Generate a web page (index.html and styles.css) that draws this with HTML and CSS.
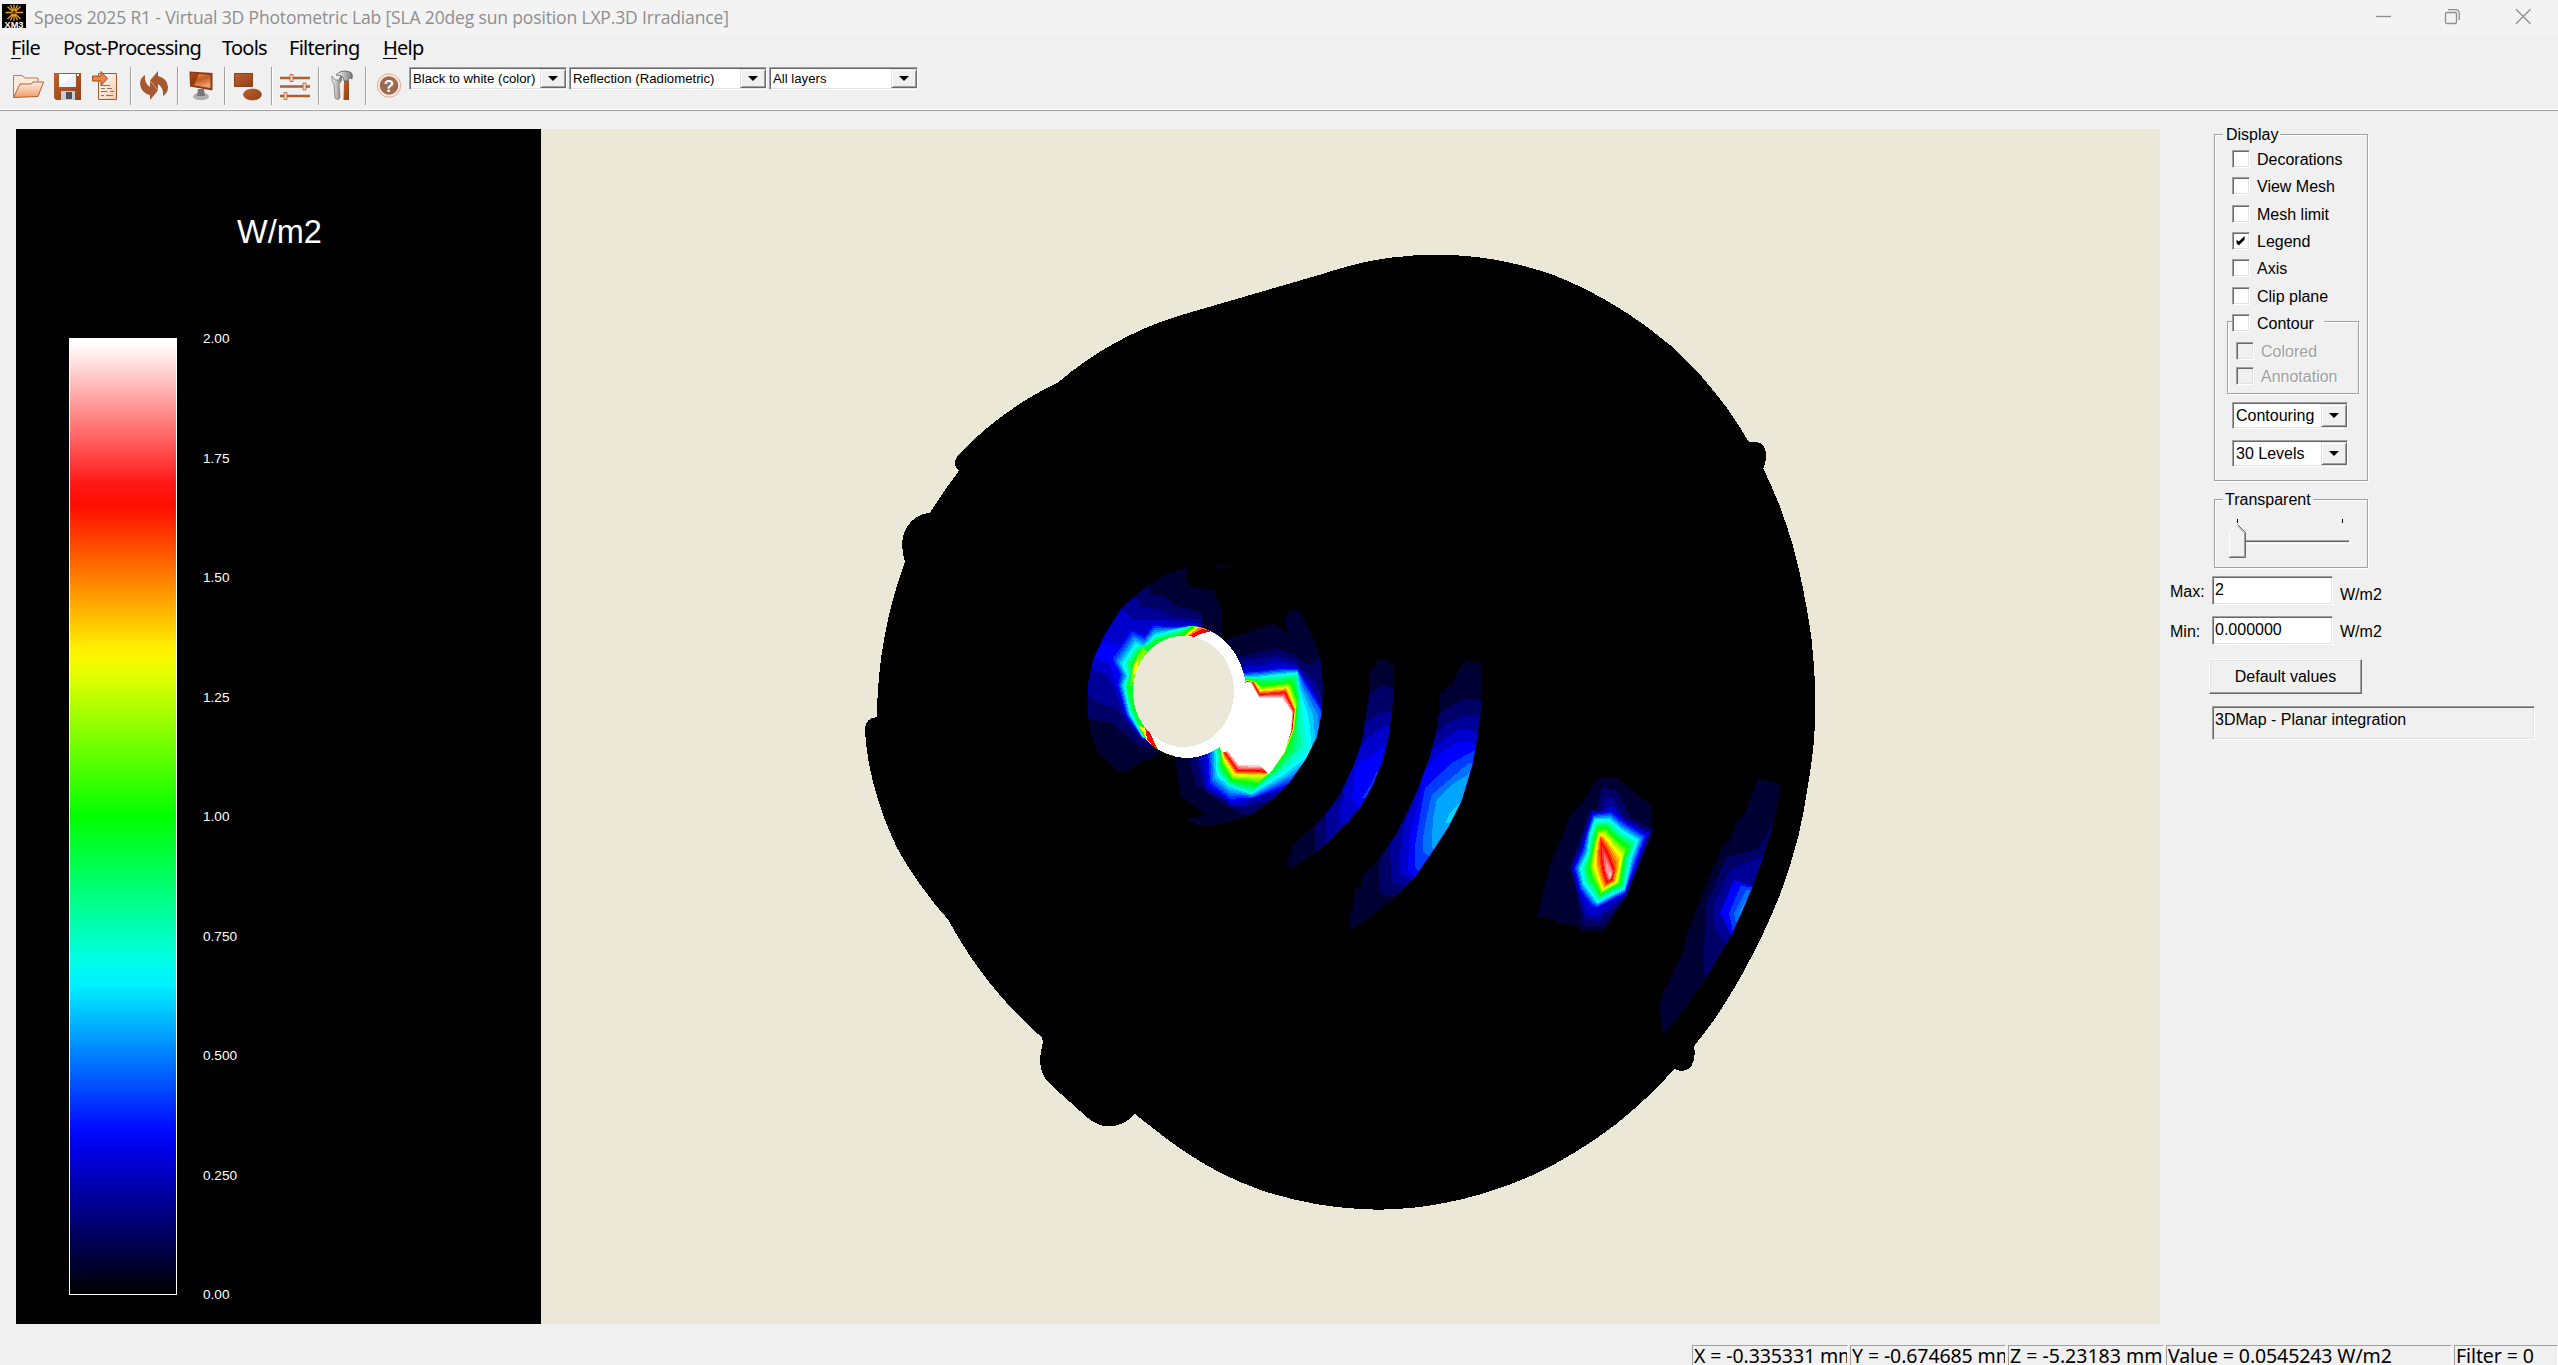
FILE: index.html
```html
<!DOCTYPE html>
<html lang="en">
<head>
<meta charset="utf-8">
<title>Speos 2025 R1 - Virtual 3D Photometric Lab</title>
<link rel="stylesheet" href="styles.css">
</head>
<body>
<header class="titlebar">
  <svg class="app-icon" viewBox="0 0 24 24"><rect width="24" height="24"/><g stroke="#e9a01c" stroke-width="1.3"><path d="M12 0.5V17M3.5 8.5H21M5.5 2.5L18.500 15M18.500 2.500L5.500 15M8.500 1L15.500 16.500M15.500 1L8.500 16.500"/></g><circle cx="12" cy="8.500" r="2" fill="#5a3a08"/><path d="M1 17H23V24H1Z"/><text x="12" y="24" text-anchor="middle" textLength="19" lengthAdjust="spacingAndGlyphs">XM3</text></svg>
  <span class="title-text">Speos 2025 R1 - Virtual 3D Photometric Lab [SLA 20deg sun position LXP.3D Irradiance]</span>
  <svg class="win-buttons" viewBox="0 0 160 34" fill="none" stroke="#8e8e8e" stroke-width="1.300"><path d="M1 16.500H16"/><rect x="70.500" y="12.500" width="11" height="11" rx="1.500"/><path d="M73 9.700H80Q84.300 9.700 84.300 14V20"/><path d="M141 9.300L155.500 23.800M155.500 9.300L141 23.800"/></svg>
</header>

<nav class="menubar">
  <span class="m-file"><u>F</u>ile</span><span class="m-post">Post-Processing</span><span class="m-tools">Tools</span><span class="m-filter">Filtering</span><span class="m-help"><u>H</u>elp</span>
</nav>

<div class="toolbar">
  <svg class="tools" viewBox="0 0 409 44">
    <defs>
      <linearGradient id="peach" x2="0" y2="1"><stop offset="0" stop-color="#fff0e4"/><stop offset="1" stop-color="#f09a68"/></linearGradient>
      <linearGradient id="rust" x2="1" y2="1"><stop offset="0" stop-color="#c0602c"/><stop offset="1" stop-color="#8e4218"/></linearGradient>
      <linearGradient id="paper" x2="1" y2="1"><stop offset="0" stop-color="#fff"/><stop offset="1" stop-color="#f6c9ac"/></linearGradient>
      <linearGradient id="screen" x2=".4" y2="1"><stop offset="0" stop-color="#ff9a58"/><stop offset=".5" stop-color="#c05a24"/><stop offset="1" stop-color="#f0a070"/></linearGradient>
      <linearGradient id="steel" x2="1"><stop offset="0" stop-color="#fff"/><stop offset="1" stop-color="#777"/></linearGradient>
    </defs>
    <g stroke="#a0a0a0"><path d="M130.500 2V40M177.500 2V40M224.500 2V40M271.500 2V40M318.500 2V40M365.500 2V40"/></g>
    <g stroke="#fff"><path d="M131.500 2V40M178.500 2V40M225.500 2V40M272.500 2V40M319.500 2V40M366.500 2V40"/></g>
    <!-- open -->
    <path d="M13.500 33V10.500H22L25 13H38V18" fill="#ffe9da" stroke="#b87a58"/><path d="M13.500 32.500L20 19H31L33 17H43.500L38 31.500Z" fill="url(#peach)" stroke="#a8643e"/>
    <!-- save -->
    <path d="M54 8H81V35H56L54 33Z" fill="url(#rust)"/><path d="M59 9H76V22H59Z" fill="#e8efff"/><path d="M59 9H76L59 21Z" fill="#fff"/><path d="M61 26H75V35H61Z" fill="#c8ccd6"/><path d="M66 27H72V34H66Z" fill="#50505c"/><path d="M77 9h2v2h-2z" fill="#fff"/>
    <!-- import -->
    <path d="M98.500 8.500H116.500V34.500H98.500Z" fill="url(#paper)" stroke="#a55a30"/><path d="M101 20.500h9M101 23.500h4m2 0h5M101 26.500h6m3 0h4M101 30.500h3m2 0h7" stroke="#8c7264"/><path d="M92.500 11H101V6.500L107.500 13.500L101 20.500V16H92.500Z" fill="#ef8448" stroke="#a04a1c"/>
    <!-- refresh -->
    <g fill="#a6582e"><path d="M158 6V11Q167 13 168 22Q168 28 163 31Q164 23 158 19V25L150 15.500Z"/><path d="M158 6V11Q167 13 168 22Q168 28 163 31Q164 23 158 19V25L150 15.500Z" transform="rotate(180 154 20.500)"/></g>
    <!-- monitor -->
    <ellipse cx="201" cy="31.500" rx="8" ry="3.800" fill="#b0b0b0"/><path d="M198 24h6l1 7h-8z" fill="#777"/><path d="M189.500 6.500L212.500 8V25.500L190 21.500Z" fill="#8a3a12"/><path d="M191.500 8.500L210.500 10V23L192 20Z" fill="url(#screen)"/><path d="M191.500 8.500L199 9L194 20.300L192 20Z" fill="#8c3208" opacity=".8"/>
    <!-- shapes -->
    <path d="M234.500 8.500h18v13h-18z" fill="url(#rust)" stroke="#8a4018"/><ellipse cx="252.500" cy="29.500" rx="9" ry="5.500" fill="url(#rust)" stroke="#8a4018" stroke-width=".6"/>
    <!-- sliders -->
    <g stroke="#ad602f" stroke-width="2.600"><path d="M280 13H310M280 21.500H310M280 31H310"/></g><g fill="#f6d6c2" stroke="#ad602f" stroke-width=".8"><path d="M290 9.500h3v7h-3zM303 18h3v7h-3zM284 27.500h3v7h-3z"/></g>
    <!-- wrench and hammer -->
    <path d="M332 11Q331 17 334 19L335 33Q337 36 340 33L339 19Q343 16 341 10L339 15H335Z" fill="url(#steel)" stroke="#777" stroke-width=".8"/><path d="M344 16H349V35H343.500Z" fill="url(#rust)"/><path d="M336 10Q341 4 350 7Q353 8 352 14Q349 11 348 16H344Q344 10 336 10Z" fill="url(#steel)" stroke="#555" stroke-width=".8"/>
    <!-- help -->
    <circle cx="389" cy="20.500" r="11.700" fill="#fbe9df" stroke="#ddae94"/><circle cx="389" cy="20.500" r="9.300" fill="#9b6a50"/><text class="q" x="389" y="27" text-anchor="middle">?</text>
  </svg>
  <div class="combo c1"><span>Black to white (color)</span><i></i></div>
  <div class="combo c2"><span>Reflection (Radiometric)</span><i></i></div>
  <div class="combo c3"><span>All layers</span><i></i></div>
</div>

<main class="work">
  <section class="legend">
    <h1>W/m2</h1>
    <div class="scale">
      <div class="ramp"></div>
      <div class="ticks"><span>2.00</span><span>1.75</span><span>1.50</span><span>1.25</span><span>1.00</span><span>0.750</span><span>0.500</span><span>0.250</span><span>0.00</span></div>
    </div>
  </section>

  <svg class="view" viewBox="541 129 1619 1195" shape-rendering="crispEdges">
    <defs>
      <clipPath id="ringClip"><path d="M383 82L320 102 262 137 225 168 185 205 130 290 100 360 84 430 82 510 92 580 115 642 250 760 375 838 403 847 405 856 440 857 500 850 570 825 640 778 690 725 735 660 770 590 785 515 789 440 780 350 765 310 745 262 713 207 600 60 430 60Z"/></clipPath>
      <clipPath id="beamClip"><ellipse cx="381" cy="455.500" rx="177" ry="198"/></clipPath>
      <clipPath id="arcA"><path d="M960 355L1000 375 1002 450 995 520 985 590 965 670 935 740 905 795 860 850 800 912 765 938 700 983 685 983 681 960 695 945 697 915 760 860 790 830 840 765 880 680 905 610 915 545 927 470 927 400Z"/></clipPath>
      <clipPath id="arcB"><path d="M1215 358L1242 372 1250 366 1263 370 1265 440 1262 520 1250 600 1238 670 1205 780 1165 860 1110 945 1065 1010 1008 1070 940 1125 873 1170 865 1138 880 1100 887 1045 903 1040 905 1010 970 940 1010 880 1050 800 1075 745 1110 650 1130 570 1138 510 1138 465 1175 430Z"/></clipPath>
      <clipPath id="streak"><path d="M775 113L800 124 843 130 830 210 820 250 790 350 757 440 697 580 620 712 560 800 495 880 488 870 477 805 485 768 550 632 558 590 615 440 670 315 685 310 710 245 735 215Z"/></clipPath>
    </defs>
    <!-- lens outline -->
    <path d="M1178 316L1324 273.500Q1340 268 1361 263A380 380 0 0 1 1390 257.700A380 380 0 0 1 1440 254.700A380 380 0 0 1 1493 259.300A380 380 0 0 1 1553.300 275A400 400 0 0 1 1606.700 300.700A400 400 0 0 1 1646.700 326.700L1673.300 347.700A500 500 0 0 1 1700 374.700A500 500 0 0 1 1726.700 407.700A500 500 0 0 1 1749 442.300C1762 440 1766 446 1766 455Q1766 463 1763.300 468.300A700 700 0 0 1 1780 506.700A700 700 0 0 1 1793.300 546.700A700 700 0 0 1 1803.300 590A700 700 0 0 1 1811.700 640A700 700 0 0 1 1815.500 700A600 600 0 0 1 1814 740A600 600 0 0 1 1808.300 783.300A600 600 0 0 1 1798.300 836.700A600 600 0 0 1 1781.700 890A600 600 0 0 1 1753.300 953.300A600 600 0 0 1 1713.300 1021L1693.800 1046.700C1697 1058 1692 1077 1674.400 1069A480 480 0 0 1 1616.200 1124A460 460 0 0 1 1536.200 1173.500A420 420 0 0 1 1475.600 1195.700A420 420 0 0 1 1417.500 1207.300A420 420 0 0 1 1378.700 1209.700A420 420 0 0 1 1315.700 1204A420 420 0 0 1 1262.400 1190.700A420 420 0 0 1 1221.200 1173.300A400 400 0 0 1 1163 1136L1134.900 1114Q1124 1126.300 1108.700 1126.300Q1097 1126 1087.900 1118L1051 1085Q1037 1073 1041 1052L1042.800 1042Q1042.500 1036 1038 1034A420 420 0 0 1 948.400 920A400 400 0 0 1 897.400 848.600A350 350 0 0 1 878.300 800.800A350 350 0 0 1 868.700 762.500A350 350 0 0 1 864.900 730.600Q865 718 877 717.200A460 460 0 0 1 905 561.600C898 542 903 517 930 512.500A500 500 0 0 1 959.300 470.400C953 467 953 460 960 453.200A340 340 0 0 1 1058.100 382.400A344 344 0 0 1 1178 316Z"/>

    <g transform="translate(1060 540) scale(.33333)">
      <g clip-path="url(#ringClip)">
        <path class="l1" d="M383 82L200 50 40 300 40 600 115 642 140 658 165 697 205 692 245 665 290 650 381 455 490 290 484 275 483 205 460 150 388 138 378 112Z"/>
        <path class="l1" d="M500 298L570 275 635 250 690 282 672 245 687 213 713 207 900 250 900 800 500 900 405 870 403 847 375 838 438 825 362 770 345 660 381 455Z"/>
        <path class="l1" d="M435 75L480 75 520 82 470 80Z"/>
        <path class="l2" d="M262 137L272 162 315 170 348 198 420 215 430 265 381 455 270 630 215 605 185 575 150 545 60 535 60 150Z"/>
        <path class="l3" d="M228 172L243 200 300 210 345 230 425 238 381 455 250 600 200 550 170 505 120 490 60 450 60 180Z"/>
        <path class="l4" d="M183 205L220 240 310 240 420 250 381 455 240 590 190 520 160 440 135 400 60 375 60 210Z"/>
        <path class="l2" d="M520 352L585 340 648 325 710 345 718 362 755 375 778 350 900 400 900 700 640 850 570 825 545 822 510 800 480 790 455 765 430 745 410 740 385 650 450 500Z"/>
        <path class="l3" d="M535 364L580 358 650 348 712 365 720 385 765 420 787 480 900 500 800 700 640 778 600 790 555 800 508 798 495 780 435 755 408 650 450 500Z"/>
        <path class="l4" d="M545 380L600 378 650 362 714 378 725 400 755 440 785 505 900 550 735 660 665 752 585 770 555 795 510 795 497 775 440 745 424 650 450 500Z"/>
        <g id="lobe"></g>
      </g>
      <ellipse cx="381" cy="455.500" rx="177" ry="198" fill="#fff"/>
      <g clip-path="url(#ringClip)"><g id="crescent"></g></g>
      <g clip-path="url(#beamClip)">
        <path fill="#80ff00" d="M218 385L232 345 250 322 262 335 240 370 225 420 210 440Z"/><path fill="#ff0" d="M222 372L236 360 232 390 218 410Z"/>
        <path fill="#0f0" d="M355 292L400 250 440 255 400 295Z"/><path fill="#ff0" d="M368 292L410 255 450 262 400 295Z"/><path fill="#ff8000" d="M376 292L420 260 450 262 400 292Z"/><path fill="#f00" d="M382 290L425 268 465 270 415 284 400 292Z"/><path fill="#fff" d="M412 290L418 283 462 272 520 300Z"/>
        <path fill="#ff0" d="M235 555L262 570 282 600 300 640 250 620Z"/><path fill="#0f8" d="M225 550L250 575 262 605 250 620Z"/><path fill="#f00" d="M256 568L268 575 290 622 292 634 272 608 262 600Z"/><path fill="#f00" d="M487 290L497 300 492 302ZM328 645h10v10h-10z"/>
      </g>
      <ellipse cx="370.500" cy="454" rx="151.500" ry="167" fill="#ebe8d7"/>

      <g clip-path="url(#arcA)">
        <path class="l1" d="M600 300H1100V1000H600Z"/>
        <path class="l2" d="M900 470L930 462 965 437 1010 448 1010 900 800 940 765 940 765 855 800 780Z"/>
        <path class="l3" d="M900 548L930 540 960 520 985 516 1010 515 1010 900 830 890 798 912 797 855 800 790Z"/>
        <path class="l4" d="M890 625L930 590 975 555 1010 565 1010 900 865 850 838 850 840 800 852 770 845 745Z"/>
        <path class="l5" d="M880 700L895 670 960 630 980 612 1010 600 1000 900 890 802 872 770 885 735Z"/>
        <path class="l6" d="M950 695L935 730 905 775 920 775 960 700Z"/>
      </g>
      <g clip-path="url(#arcB)">
        <path class="l1" d="M800 300H1300V1200H800Z"/>
        <path class="l2" d="M1120 540L1160 505 1215 475 1300 487V1100L1008 1070 962 1062 957 990 965 930 1000 850 1090 680Z"/>
        <path class="l3" d="M1115 590L1160 550 1210 528 1300 522V1000L1035 1040 993 1025 992 970 990 900 1050 790Z"/>
        <path class="l4" d="M1100 640L1130 615 1160 590 1200 565 1300 585V1000L1055 1020 1020 1000 1022 920 1030 860 1075 740Z"/>
        <path class="l5" d="M1085 700L1150 635 1200 605 1300 612V900L1062 1012 1042 990 1050 880 1080 770Z"/>
        <path class="l6" d="M1095 745L1120 720 1180 665 1245 632 1300 630V900L1080 1000 1065 980 1065 920 1085 800Z"/>
        <path class="l7" d="M1115 765L1225 670 1300 665V900L1105 948 1090 935 1088 900 1100 830Z"/>
        <path class="l8" d="M1130 780L1175 735 1228 700 1300 700 1200 900 1118 928 1115 900 1120 830Z"/>
        <path class="l9" d="M1200 787L1170 820 1155 850 1168 850 1210 785Z"/>
      </g>
    </g>

    <g transform="translate(1500 740) scale(.33333)">
      <path class="l1" d="M295 112L353 112 365 128 458 200 453 240 460 272 400 420 375 475 312 572 238 575 235 560 175 550 168 540 112 530 150 375 188 285 215 218 240 198Z"/>
      <path class="l2" d="M305 142L350 152 390 230 460 270 375 475 312 557 248 557 232 470 210 380 240 300 270 210 290 210Z"/>
      <path class="l3" d="M318 170L340 176 370 232 452 276 380 465 300 542 255 540 234 468 213 380 245 300 272 212 305 212Z"/>
      <path class="l4" d="M328 200L338 202 370 238 447 280 380 462 295 527 262 525 238 462 216 380 245 320 275 217 320 217Z"/>
      <g id="spot"></g>
      <g clip-path="url(#streak)">
        <path class="l1" d="M400 100H900V900H400Z"/>
        <path class="l2" d="M678 352L720 340 772 328 820 248 860 250 700 700 622 714 612 700 615 500Z"/>
        <path class="l3" d="M690 388L792 348 850 348 690 640 680 614 655 580 638 545 640 500Z"/>
        <path class="l5" d="M702 420L757 438 800 440 697 582 688 575 660 520Z"/>
        <path class="l6" d="M722 438L760 442 800 450 700 578 687 520Z"/>
        <path class="l7" d="M738 450L757 448 720 550 706 545 703 520Z"/>
        <path class="l8" d="M748 478L740 500 722 535 718 522 738 480Z"/>
      </g>
    </g>
  </svg>

  <aside class="panel">
    <fieldset class="group display"><legend>Display</legend>
      <div class="checks">
        <label><b></b>Decorations</label><label><b></b>View Mesh</label><label><b></b>Mesh limit</label>
        <label><b><svg viewBox="0 0 18 18"><path d="M4 7.500V11.500L6.500 14 13 7.500V3.500L6.500 9.500Z"/></svg></b>Legend</label>
        <label><b></b>Axis</label><label><b></b>Clip plane</label><label class="over"><b></b>Contour</label>
      </div>
      <div class="contour off"><label><b></b>Colored</label><label><b></b>Annotation</label></div>
      <div class="combo big"><span>Contouring</span><i></i></div>
      <div class="combo big"><span>30 Levels</span><i></i></div>
    </fieldset>
    <fieldset class="group trans"><legend>Transparent</legend>
      <svg viewBox="0 0 152 67"><path d="M22.500 19v4M127.500 19v4" stroke="#000"/><path d="M31 40.500H134" stroke="#a0a0a0"/><path d="M31 41.500H134" stroke="#696969"/><path d="M31 43.500H135.500V40" stroke="#fff" fill="none"/><path d="M14.500 57.500V32.500L22.500 24.500L30.500 32.500V57.500Z" fill="#f0f0f0"/><path d="M14.500 57V32.500L22.500 24.500" fill="none" stroke="#fff"/><path d="M22.500 24.500L30.500 32.500V57.500H14" fill="none" stroke="#696969"/><path d="M23 26.500L29.500 33V56.500H15" fill="none" stroke="#a0a0a0"/></svg>
    </fieldset>
    <div class="limit max"><label>Max:</label><div class="input">2</div><span>W/m2</span></div>
    <div class="limit min"><label>Min:</label><div class="input">0.000000</div><span>W/m2</span></div>
    <div class="button">Default values</div>
    <div class="input info">3DMap - Planar integration</div>
  </aside>
</main>

<footer class="status">
  <div class="s1"><span>X = -0.335331 mm</span></div><div class="s2"><span>Y = -0.674685 mm</span></div><div class="s3"><span>Z = -5.23183 mm</span></div><div class="s4"><span>Value = 0.0545243 W/m2</span></div><div class="s5"><span>Filter = 0</span></div>
</footer>
<script src="contours.js"></script>
</body>
</html>
```
FILE: contours.js
```javascript
// Fills the steep regions of the map with iso-level polygons interpolated between key contours.
const STOPS = [[0, 0, 0], [0, 0, 255], [0, 255, 255], [0, 255, 0], [255, 255, 0], [255, 0, 0], [255, 255, 255]];

function colour(level) {
  const t = Math.min(level / 5, 5.999), i = Math.floor(t), f = t - i;
  return 'rgb(' + STOPS[i].map((c, k) => Math.round(c + (STOPS[i + 1][k] - c) * f)).join(',') + ')';
}

function fill(id, keys) {
  const group = document.getElementById(id);
  for (let k = 0; k < keys.length; k++) {
    const [level, a] = keys[k], next = keys[k + 1];
    const count = next ? next[0] - level : 1;
    for (let s = 0; s < count; s++) {
      const pts = a.map((v, n) => next ? v + (next[1][n] - v) * s / count : v);
      const p = document.createElementNS('http://www.w3.org/2000/svg', 'polygon');
      p.setAttribute('points', pts.map(v => v.toFixed(1)).join(' '));
      p.setAttribute('fill', colour(level + s));
      group.appendChild(p);
    }
  }
}

fill('spot', [
  [5, [278,222, 332,212, 375,245, 440,285, 410,370, 375,460, 290,505, 275,502, 240,455, 220,382, 245,330, 262,270]],
  [10, [285,237, 330,238, 362,268, 415,300, 395,350, 375,445, 292,488, 275,465, 250,430, 240,385, 262,340, 270,280]],
  [15, [293,265, 320,262, 350,295, 385,320, 372,360, 362,430, 300,465, 290,440, 275,420, 265,385, 275,340, 282,300]],
  [20, [298,282, 312,285, 338,315, 365,345, 360,380, 350,425, 308,450, 300,430, 290,405, 282,375, 285,340, 290,310]],
  [24, [301,295, 306,298, 325,330, 343,375, 346,390, 338,422, 318,434, 312,420, 305,395, 300,365, 298,340, 299,315]],
  [26, [306,318, 308,320, 324,350, 336,382, 341,393, 336,414, 325,424, 319,412, 312,390, 308,365, 306,345, 305,330]],
  [28, [319,366, 320,366, 325,375, 332,387, 336,396, 334,410, 329,418, 325,410, 322,400, 319,390, 318,379, 318,370]],
  [29, [328,396, 330,396, 331,398, 332,401, 332,404, 332,407, 330,410, 329,408, 328,405, 327,402, 327,399, 327,397]]
]);

fill('crescent', [
  [5, [130,305, 180,318, 213,268, 255,285, 278,252, 340,258, 400,255, 381,455, 250,600, 200,530, 172,440, 150,372, 103,350]],
  [6, [160,352, 185,320, 216,275, 255,292, 281,258, 340,262, 400,256, 381,455, 250,598, 200,525, 175,435, 182,402, 160,362]],
  [10, [187,370, 210,335, 228,308, 250,322, 284,285, 340,270, 395,258, 381,455, 248,592, 209,520, 190,435, 203,408, 188,378]],
  [14, [216,362, 228,345, 243,328, 260,317, 290,298, 345,284, 400,262, 381,455, 250,585, 214,500, 202,440, 213,400, 210,375]]
]);

fill('lobe', [
  [5, [552,395, 612,390, 650,385, 712,385, 742,430, 800,530, 760,660, 690,740, 580,775, 512,785, 445,735, 440,650, 450,500]],
  [7, [553,402, 605,398, 646,392, 712,389, 734,436, 786,520, 800,640, 700,715, 580,770, 509,768, 455,725, 450,643, 450,500]],
  [10, [555,411, 590,411, 640,405, 712,397, 719,450, 745,525, 758,640, 670,705, 573,762, 505,738, 470,705, 466,635, 450,500]],
  [12, [558,413, 588,413, 640,412, 710,405, 717,470, 716,540, 725,620, 655,695, 573,756, 508,732, 476,695, 472,628, 450,500]],
  [15, [560,418, 588,424, 605,436, 695,425, 713,480, 705,565, 677,637, 634,695, 590,735, 515,722, 485,675, 480,620, 450,500]],
  [20, [562,421, 585,428, 602,450, 682,442, 706,505, 699,570, 672,639, 632,697, 615,706, 522,706, 490,655, 484,622, 450,500]],
  [25, [562,424, 580,427, 598,463, 676,456, 703,512, 696,576, 660,640, 628,700, 620,696, 531,692, 495,640, 488,625, 450,500]],
  [30, [560,426, 573,429, 597,474, 666,474, 696,517, 692,577, 673,637, 627,704, 600,676, 538,676, 503,632, 484,640, 450,500]]
]);
```
FILE: styles.css
```css
* { box-sizing: border-box; }
body { margin: 0; width: 2558px; height: 1365px; overflow: hidden; background: #f0f0f0; color: #000; font: 16px/20px "Liberation Sans", Arial, sans-serif; display: flex; flex-direction: column; }

.titlebar { flex: none; height: 34px; background: #f3f3f3; display: flex; align-items: center; font: 17.500px/34px "Open Sans", "Noto Sans", sans-serif; color: #8e8e8e; }
.app-icon { width: 24px; height: 24px; margin: 0 8px 2px 2px; }
.app-icon text { font: bold 9px "Liberation Sans", sans-serif; fill: #fff; }
.title-text { flex: 1; white-space: nowrap; letter-spacing: -.15px; }
.win-buttons { width: 160px; height: 34px; margin-right: 23px; }

.menubar { flex: none; height: 31px; display: flex; padding-left: 11px; font: 20px/28px "Noto Sans", "Open Sans", sans-serif; letter-spacing: -.75px; white-space: nowrap; }
.menubar u { text-underline-offset: 3px; text-decoration-thickness: 1px; }
.m-file { width: 52px; } .m-post { width: 159px; } .m-tools { width: 67px; } .m-filter { width: 94px; }

.toolbar { flex: none; height: 46px; display: flex; align-items: flex-start; gap: 2px; border-bottom: 1px solid #a0a0a0; box-shadow: inset 0 -1px #fff; }
.tools { width: 409px; height: 44px; margin-right: -2px; flex: none; }
.q { font: bold 17px "Liberation Sans", sans-serif; fill: #fff; }
.combo { display: flex; height: 23px; margin-top: 2px; background: #fff; border: 1px solid; border-color: #a0a0a0 #fff #fff #a0a0a0; box-shadow: inset 1px 1px #696969, inset -1px -1px #e3e3e3; font-size: 13.200px; line-height: 20px; white-space: nowrap; }
.combo span { flex: 1; padding: 1px 0 0 3px; }
.combo i { width: 26px; margin: 1px 0; background: #f0f0f0; border: 1px solid; border-color: #e3e3e3 #696969 #696969 #e3e3e3; box-shadow: inset 1px 1px #fff, inset -1px -1px #a0a0a0; display: grid; place-items: center; }
.combo i::after { content: ""; border: 5.500px solid transparent; border-top-color: #000; border-bottom: 0; }
.c1 { width: 158px; } .c2 { width: 198px; } .c3 { width: 149px; }

.work { flex: none; height: 1213px; padding: 18px 0 0 16px; display: flex; }
.legend { width: 525px; height: 1195px; background: #000; color: #fff; }
.legend h1 { margin: 0; padding: 84px 0 0 221px; font-weight: 400; font-size: 32.500px; line-height: 38px; }
.scale { display: flex; margin: 87px 0 0 53px; }
.ramp { width: 108px; height: 957px; border: 1px solid #fff; background: linear-gradient(to top, #000 0, #0000e6 15%, #000dff 17.500%, #00f2ff 32.500%, #00ffe6 35%, #0f0 50%, #e6ff00 65%, #fff200 67.500%, #ff0d00 82.500%, #ff1919 85%, #fff 99.500%); }
.ticks { margin: -10px 0 -10px 26px; display: flex; flex-direction: column; justify-content: space-between; font-size: 13.600px; line-height: 21px; }
.view { width: 1619px; height: 1195px; background: #ebe8d7; }
.l1 { fill: #000033; } .l2 { fill: #000066; } .l3 { fill: #000099; } .l4 { fill: #0000cc; } .l5 { fill: #0000ff; }
.l6 { fill: #003cff; } .l7 { fill: #0070ff; } .l8 { fill: #00a5ff; } .l9 { fill: #00dcff; }

.panel { width: 398px; padding-top: 5px; display: flex; flex-direction: column; }
.group { margin: 0 0 0 54px; padding: 0; width: 154px; min-width: 0; border: 1px solid #a0a0a0; box-shadow: 1px 1px #fff, inset 1px 1px #fff; }
.group legend { float: left; margin: -10px 0 0 8px; padding: 0 2px 0 3px; background: #f0f0f0; line-height: 20px; height: 20px; }
.display { height: 347px; }
.display legend { margin-bottom: 5px; }
.checks { clear: both; margin: 0 0 0 17px; height: 182px; display: flex; flex-direction: column; justify-content: space-between; position: relative; }
.panel fieldset label { display: flex; height: 18px; line-height: 20px; align-items: flex-start; white-space: nowrap; gap: 7px; }
.panel b { flex: none; width: 18px; height: 18px; background: #fff; border: 1px solid; border-color: #a0a0a0 #fff #fff #a0a0a0; box-shadow: inset 1px 1px #696969, inset -1px -1px #e3e3e3; }
.panel b svg { display: block; width: 16px; height: 16px; }
.over { width: 92px; background: #f0f0f0; }
.contour { margin: -11px 0 0 12px; width: 132px; height: 73px; border: 1px solid #a0a0a0; box-shadow: 1px 1px #fff, inset 1px 1px #fff; padding: 20px 0 0 8px; display: flex; flex-direction: column; gap: 7px; }
.off label { color: #a0a0a0; text-shadow: 1px 1px #fff; }
.off b { background: #f0f0f0; }
.combo.big { width: 116px; height: 27px; margin: 8px 0 11px 17px; font-size: 16px; line-height: 24px; }
.trans { height: 69px; margin-top: 18px; }
.trans svg { display: block; width: 152px; height: 67px; }
.trans legend { margin-bottom: -10px; padding-left: 2px; }
.limit { display: flex; height: 29px; }
.limit label { width: 42px; padding: 6px 0 0; line-height: 20px; }
.limit span { padding: 9px 0 0 7px; }
.limit { margin-left: 10px; }
.max { margin-top: 8px; } .min { margin-top: 11px; }
.min span { padding-top: 6px; }
.input { width: 121px; height: 29px; background: #fff; border: 1px solid; border-color: #a0a0a0 #fff #fff #a0a0a0; box-shadow: inset 1px 1px #696969, inset -1px -1px #e3e3e3; padding: 3px 0 0 2px; }
.button { margin: 14px 0 0 49px; width: 153px; height: 35px; border: 1px solid; border-color: #fff #696969 #696969 #fff; box-shadow: inset -1px -1px #a0a0a0, inset 1px 1px #e3e3e3; text-align: center; line-height: 33px; }
.input.info { margin: 12px 0 0 52px; width: 323px; height: 34px; background: #f0f0f0; }

.status { flex: none; margin-top: 21px; padding-left: 1692px; height: 20px; display: flex; gap: 2px; font: 19.500px/20px "Noto Sans", "Open Sans", sans-serif; white-space: nowrap; letter-spacing: -.1px; }
.status div { overflow: hidden; flex: none; padding-left: 1px; border: 1px solid; border-color: #a0a0a0 #fff transparent #a0a0a0; height: 24px; }
.s1 { width: 156px; } .s2 { width: 156px; } .s3 { width: 156px; letter-spacing: 0; } .s4 { width: 286px; } .s5 { width: 104px; }
```
